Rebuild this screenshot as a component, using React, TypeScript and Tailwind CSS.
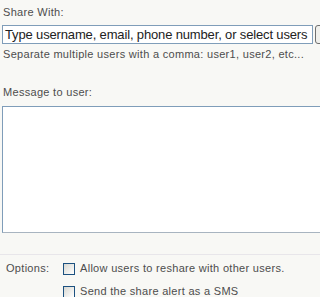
import React from 'react';

function Checkbox() {
  return (
    <div className="mt-px h-[12px] w-[12px] shrink-0 border border-[#1c5180] bg-gradient-to-br from-[#d8d8d2] to-white" />
  );
}

export default function App() {
  return (
    <div className="h-[297px] w-[320px] overflow-hidden bg-[#f8f8f5] pt-[6px] font-['Liberation_Sans',Arial,sans-serif] text-[11px] leading-[13px] tracking-[0.3px] text-[#4d4d4d]">
      <div className="pl-[3px]">Share With:</div>

      {/* recipient field + picker button */}
      <div className="mt-[6px] flex gap-[2px] pl-[2px]">
        <div className="h-[19px] w-[311px] shrink-0 overflow-hidden border border-[#7f9db9] bg-white pl-[2px] text-[13px] leading-[17px] tracking-[-0.15px] whitespace-nowrap text-[#222]">
          Type username, email, phone number, or select users
        </div>
        <div className="h-[19px] w-[20px] shrink-0 rounded-[3px] border border-[#6f6f6f] bg-[#f0f0ec]" />
      </div>

      <div className="mt-[4px] pl-[3px] whitespace-nowrap">
        Separate multiple users with a comma: user1, user2, etc...
      </div>

      <div className="mt-[25px] pl-[3px]">Message to user:</div>

      <div className="ml-[2px] mt-[7px] h-[127px] w-[330px] border border-[#7f9db9] border-b-[#a8b4c0] bg-white" />

      <div className="mt-[21px] h-px bg-[#e8e6ea]" />

      <div className="mt-[7px] flex">
        <div className="w-[63px] shrink-0 pl-[6px]">Options:</div>
        <div className="flex flex-col gap-[10px]">
          <div className="flex gap-[5px]">
            <Checkbox />
            <span className="whitespace-nowrap">Allow users to reshare with other users.</span>
          </div>
          <div className="flex gap-[5px]">
            <Checkbox />
            <span className="whitespace-nowrap">Send the share alert as a SMS</span>
          </div>
        </div>
      </div>
    </div>
  );
}
